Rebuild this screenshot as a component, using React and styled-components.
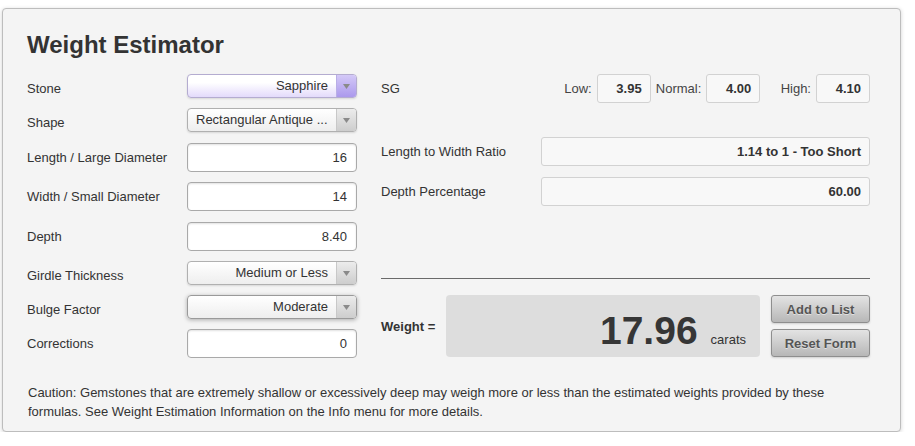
import React from "react";
import styled, { createGlobalStyle, css } from "styled-components";

const Global = createGlobalStyle`
  body {
    margin: 0;
    background: #ffffff;
    font-family: "Liberation Sans", Arial, sans-serif;
    color: #333333;
  }
`;

const Panel = styled.div`
  box-sizing: border-box;
  width: 899px;
  margin: 8px 0 0 2px;
  padding: 22px 30px 10px 24px;
  background: #f4f4f4;
  border: 1px solid #bdbdbd;
  border-radius: 4px;
  box-shadow: 0 1px 4px rgba(0, 0, 0, 0.18);
`;

const Title = styled.h1`
  margin: 0 0 15px;
  font-size: 24px;
  line-height: 28px;
  font-weight: bold;
  color: #333333;
`;

const Body = styled.div`
  display: grid;
  grid-template-columns: 330px 1fr;
  column-gap: 24px;
`;

const LeftCol = styled.div`
  display: flex;
  flex-direction: column;
`;

const Row = styled.div`
  display: flex;
  align-items: center;
  margin-bottom: ${(p) => p.$mb || 0}px;
`;

const Label = styled.div`
  width: 160px;
  font-size: 13px;
  line-height: 16px;
  color: #333333;
  padding-top: ${(p) => (p.$low ? 6 : 0)}px;
`;

const TextInput = styled.div`
  box-sizing: border-box;
  width: 170px;
  height: 29px;
  padding: 0 9px;
  display: flex;
  align-items: center;
  justify-content: flex-end;
  font-size: 13px;
  color: #333333;
  background: #ffffff;
  border: 1px solid #a9a9a9;
  border-radius: 4px;
  box-shadow: inset 0 1px 2px rgba(0, 0, 0, 0.12);
`;

const SelectBox = styled.div`
  box-sizing: border-box;
  width: 170px;
  height: 24px;
  display: flex;
  border: 1px solid #b0b0b0;
  border-radius: 4px;
  overflow: hidden;
  background: linear-gradient(#ffffff, #eeeeee);
  box-shadow: 0 1px 2px rgba(0, 0, 0, 0.12);
  ${(p) =>
    p.$active &&
    css`
      border-color: #b4acd0;
      background: linear-gradient(#ffffff 35%, #e3dafb);
    `}
  ${(p) =>
    p.$focus &&
    css`
      border-color: #9a9a9a;
      box-shadow: 0 1px 4px rgba(0, 0, 0, 0.3);
    `}
`;

const SelectText = styled.div`
  flex: 1;
  padding: 0 8px;
  font-size: 13px;
  line-height: 22px;
  color: #333333;
  text-align: ${(p) => (p.$left ? "left" : "right")};
  white-space: nowrap;
  overflow: hidden;
`;

const SelectArrow = styled.div`
  width: 19px;
  display: flex;
  align-items: center;
  justify-content: center;
  border-left: 1px solid #c8c8c8;
  background: linear-gradient(#ececec, #cdcdcd);
  ${(p) =>
    p.$active &&
    css`
      border-left-color: #b9aee6;
      background: linear-gradient(#d4c9f7, #ab99ec);
    `}
`;

const Arrow = () => (
  <svg width="7" height="5" viewBox="0 0 7 5">
    <path d="M0 0 H7 L3.5 5 Z" fill="#8a8a8a" />
  </svg>
);

const Select = ({ value, active, left, focus }) => (
  <SelectBox $active={active} $focus={focus}>
    <SelectText $left={left}>{value}</SelectText>
    <SelectArrow $active={active}>
      <Arrow />
    </SelectArrow>
  </SelectBox>
);

const RightCol = styled.div`
  display: flex;
  flex-direction: column;
`;

const SGRow = styled.div`
  display: grid;
  grid-template-columns: 160px repeat(3, 1fr);
  align-items: center;
  margin-bottom: 34px;
`;

const SGCell = styled.div`
  display: flex;
  align-items: center;
  justify-content: flex-end;
  gap: 5px;
  font-size: 13px;
  color: #444444;
`;

const ValueBox = styled.div`
  box-sizing: border-box;
  width: ${(p) => (p.$w ? `${p.$w}px` : "auto")};
  flex: ${(p) => (p.$w ? "none" : 1)};
  height: 29px;
  padding: 0 8px;
  display: flex;
  align-items: center;
  justify-content: flex-end;
  font-size: 13px;
  font-weight: bold;
  color: #333333;
  background: #f8f8f8;
  border: 1px solid #d2d2d2;
  border-radius: 3px;
`;

const Rule = styled.div`
  height: 1px;
  background: #6a6a6a;
  margin: 72px 0 16px;
`;

const WeightRow = styled.div`
  display: flex;
  align-items: center;
`;

const WeightLabel = styled.div`
  width: 65px;
  font-size: 13px;
  font-weight: bold;
  color: #333333;
`;

const WeightBox = styled.div`
  box-sizing: border-box;
  width: 314px;
  height: 62px;
  padding: 17px 14px 0 0;
  display: flex;
  align-items: baseline;
  justify-content: flex-end;
  gap: 13px;
  background: #dddddd;
  border-radius: 4px;
`;

const WeightValue = styled.span`
  font-size: 39px;
  line-height: 38px;
  font-weight: bold;
  color: #363636;
`;

const Unit = styled.span`
  font-size: 13px;
  color: #333333;
`;

const Buttons = styled.div`
  margin-left: auto;
  display: flex;
  flex-direction: column;
  gap: 6px;
`;

const Button = styled.button`
  box-sizing: border-box;
  width: 99px;
  height: 28px;
  padding: 0;
  font-family: inherit;
  font-size: 13px;
  font-weight: bold;
  color: #555555;
  text-shadow: 0 1px 0 rgba(255, 255, 255, 0.5);
  background: linear-gradient(#e3e3e3, #b7b7b7);
  border: 1px solid #8e8e8e;
  border-radius: 3px;
  box-shadow: 0 1px 2px rgba(0, 0, 0, 0.15);
  cursor: pointer;
`;

const Caution = styled.p`
  margin: 25px 0 0 1px;
  font-size: 13px;
  line-height: 19px;
  color: #333333;
  max-width: 842px;
`;

export default function App() {
  return (
    <>
      <Global />
      <Panel>
        <Title>Weight Estimator</Title>
        <Body>
          <LeftCol>
            <Row $mb={10}>
              <Label $low>Stone</Label>
              <Select value="Sapphire" active />
            </Row>
            <Row $mb={11}>
              <Label $low>Shape</Label>
              <Select value="Rectangular Antique ..." left />
            </Row>
            <Row $mb={10}>
              <Label>Length / Large Diameter</Label>
              <TextInput>16</TextInput>
            </Row>
            <Row $mb={11}>
              <Label>Width / Small Diameter</Label>
              <TextInput>14</TextInput>
            </Row>
            <Row $mb={10}>
              <Label>Depth</Label>
              <TextInput>8.40</TextInput>
            </Row>
            <Row $mb={10}>
              <Label $low>Girdle Thickness</Label>
              <Select value="Medium or Less" />
            </Row>
            <Row $mb={10}>
              <Label $low>Bulge Factor</Label>
              <Select value="Moderate" focus />
            </Row>
            <Row>
              <Label>Corrections</Label>
              <TextInput>0</TextInput>
            </Row>
          </LeftCol>
          <RightCol>
            <SGRow>
              <Label>SG</Label>
              <SGCell>
                Low:<ValueBox $w={54}>3.95</ValueBox>
              </SGCell>
              <SGCell>
                Normal:<ValueBox $w={54}>4.00</ValueBox>
              </SGCell>
              <SGCell>
                High:<ValueBox $w={54}>4.10</ValueBox>
              </SGCell>
            </SGRow>
            <Row $mb={11}>
              <Label>Length to Width Ratio</Label>
              <ValueBox>1.14 to 1 - Too Short</ValueBox>
            </Row>
            <Row>
              <Label>Depth Percentage</Label>
              <ValueBox>60.00</ValueBox>
            </Row>
            <Rule />
            <WeightRow>
              <WeightLabel>Weight =</WeightLabel>
              <WeightBox>
                <WeightValue>17.96</WeightValue>
                <Unit>carats</Unit>
              </WeightBox>
              <Buttons>
                <Button>Add to List</Button>
                <Button>Reset Form</Button>
              </Buttons>
            </WeightRow>
          </RightCol>
        </Body>
        <Caution>
          Caution: Gemstones that are extremely shallow or excessively deep may
          weigh more or less than the estimated weights provided by these
          formulas. See Weight Estimation Information on the Info menu for more
          details.
        </Caution>
      </Panel>
    </>
  );
}
